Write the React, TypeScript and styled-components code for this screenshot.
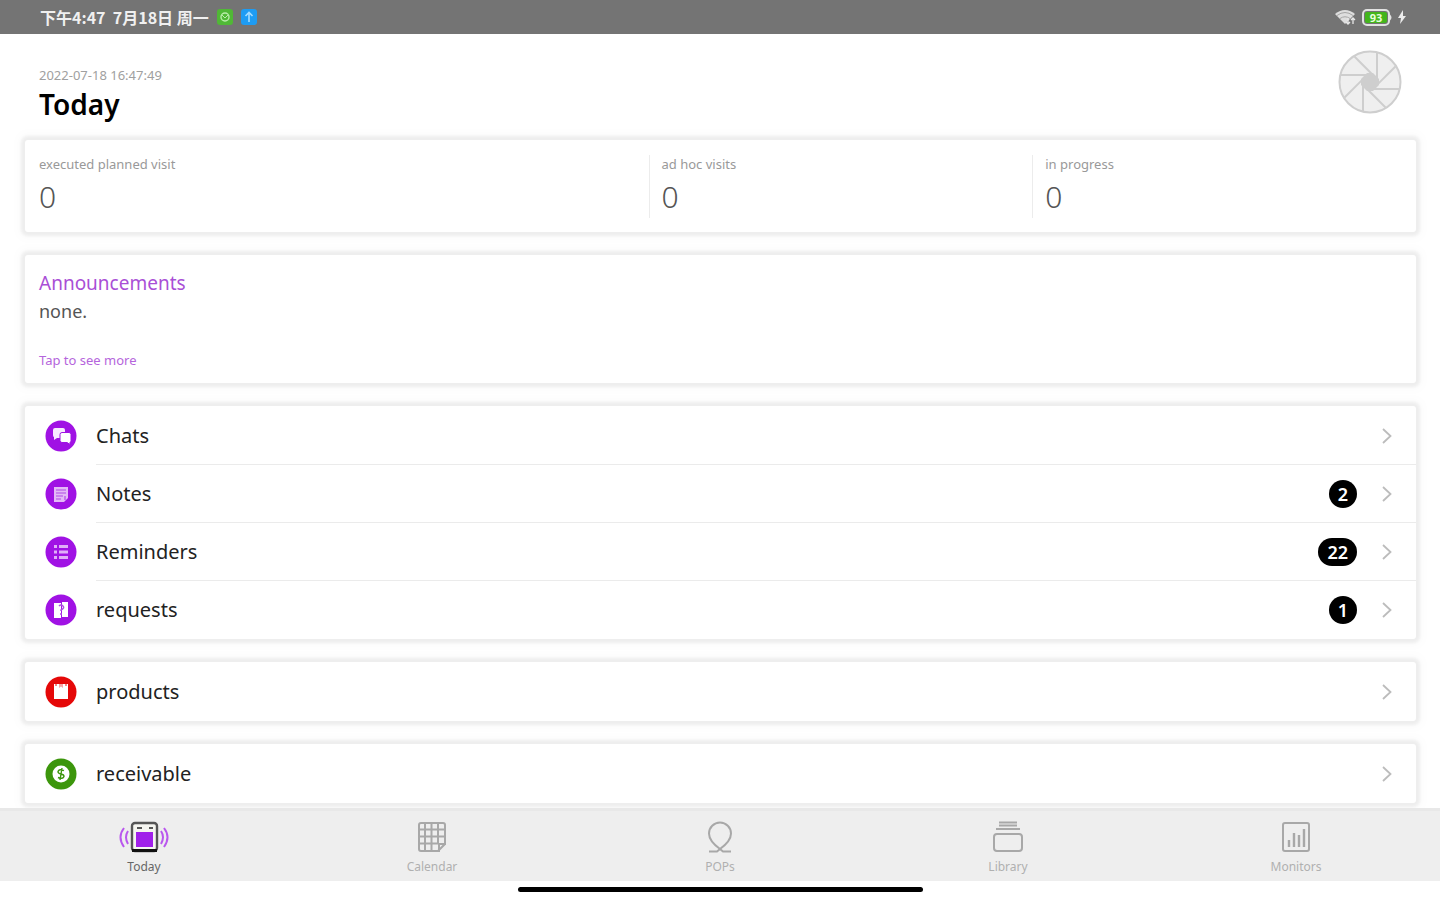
import React from "react";
import styled, { createGlobalStyle, css } from "styled-components";

const GlobalStyle = createGlobalStyle`
  * { box-sizing: border-box; }
  body {
    margin: 0;
    background: #fff;
    color: #222;
    font-family: "Noto Sans", "Noto Sans CJK SC", sans-serif;
  }
  h1, h2, p, ul, dl, dt, dd { margin: 0; padding: 0; }
  ul { list-style: none; }
`;

const Screen = styled.div`
  display: flex;
  flex-direction: column;
  height: 100vh;
  overflow: hidden;
`;

const StatusBar = styled.div`
  flex: none;
  display: flex;
  align-items: center;
  justify-content: space-between;
  height: 34px;
  padding: 0 34px 0 40px;
  background: #747474;
  color: #f0f0f0;
  font: 700 16px/24px "Noto Sans CJK SC", sans-serif;
`;

const StatusGroup = styled.div<{ $gap: number }>`
  display: flex;
  align-items: center;
  gap: ${(p) => p.$gap}px;
`;

const Content = styled.main`
  flex: 1;
  min-height: 0;
  overflow: hidden;
  display: flex;
  flex-direction: column;
  gap: 23px;
  padding: 0 24px 0 25px;
`;

const PageHeader = styled.header`
  flex: none;
  display: flex;
  justify-content: space-between;
  align-items: flex-start;
  height: 83px;
  padding: 16px 14px 0;
`;

const Heading = styled.div`
  padding-top: 16px;
`;

const Timestamp = styled.p`
  font-size: 13px;
  line-height: 18px;
  color: #a0a0a0;
`;

const Title = styled.h1`
  font-size: 28px;
  line-height: 40px;
  font-weight: 600;
  color: #000;
`;

const Card = styled.section`
  flex: none;
  background: #fff;
  border-radius: 3px;
  box-shadow: 0 0 3px 4px #eeeeee, 0 0 10px 8px rgba(0, 0, 0, 0.015);
`;

const Stats = styled.dl`
  display: grid;
  grid-template-columns: 13fr 8fr 8fr;
  height: 92px;
  padding: 15px 0 14px;
`;

const Stat = styled.div`
  padding: 0 12px;
  & + & { border-left: 1px solid #ececec; }
  &:first-child { padding-left: 14px; }
`;

const StatLabel = styled.dt`
  font-size: 13px;
  line-height: 18px;
  color: #999;
`;

const StatValue = styled.dd`
  padding-top: 6px;
  font-size: 30px;
  line-height: 36px;
  font-weight: 300;
  color: #555;
`;

const Announcement = styled.div`
  display: flex;
  flex-direction: column;
  align-items: flex-start;
  height: 128px;
  padding: 14px;
`;

const AnnouncementTitle = styled.h2`
  font-size: 19px;
  line-height: 28px;
  font-weight: 400;
  color: #a94fd6;
`;

const AnnouncementText = styled.p`
  font-size: 18px;
  line-height: 28px;
  color: #555;
`;

const MoreLink = styled.a`
  margin-top: 26px;
  font-size: 13px;
  line-height: 18px;
  color: #b565dc;
  text-decoration: none;
`;

const List = styled.ul`
  padding-top: 1px;
`;

const RowLink = styled.a`
  display: flex;
  align-items: center;
  gap: 19px;
  height: 58px;
  padding-left: 20px;
  color: #222;
  text-decoration: none;
`;

const RowBody = styled.span`
  flex: 1;
  align-self: stretch;
  display: flex;
  align-items: center;
  gap: 25px;
  padding-right: 24px;
`;

const Item = styled.li`
  &:not(:last-child) ${RowBody} { border-bottom: 1px solid #ebebeb; }
`;

const RowLabel = styled.span`
  flex: 1;
  font-size: 20px;
  line-height: 28px;
`;

const Badge = styled.span`
  min-width: 28px;
  height: 28px;
  padding: 0 9px;
  border-radius: 14px;
  background: #000;
  color: #fff;
  font-size: 18px;
  line-height: 28px;
  font-weight: 600;
  text-align: center;
`;

const TabBar = styled.nav`
  flex: none;
  display: grid;
  grid-template-columns: repeat(5, 1fr);
  height: 73px;
  background: #eee;
  border-top: 3px solid #e8e8e8;
`;

const Tab = styled.button<{ $active?: boolean }>`
  display: flex;
  flex-direction: column;
  align-items: center;
  gap: 5px;
  padding: 10px 0 0;
  border: 0;
  background: none;
  font: 12px/18px "Noto Sans", sans-serif;
  color: #b0b0b0;
  ${(p) => p.$active && css`color: #666;`}
`;

const HomeArea = styled.div`
  flex: none;
  display: flex;
  justify-content: center;
  height: 19px;
  padding-top: 6px;
`;

const HomeBar = styled.div`
  width: 405px;
  max-width: 60%;
  height: 5px;
  border-radius: 3px;
  background: #000;
`;

const Aperture = () => (
  <svg width="64" height="64" viewBox="0 0 64 64" fill="none" stroke="#cecece" strokeWidth="2">
    <circle cx="32" cy="32" r="30.5" fill="#efefef" />
    {[0, 45, 90, 135, 180, 225, 270, 315].map((a) => (
      <path key={a} d="M39 3V28" transform={`rotate(${a} 32 32)`} />
    ))}
    <path d="M29 23h6l6 6v6l-6 6h-6l-6-6v-6z" fill="#cecece" stroke="none" />
  </svg>
);

const MessageAppIcon = () => (
  <svg width="16" height="16" viewBox="0 0 16 16">
    <rect width="16" height="16" rx="3" fill="#50b836" />
    <circle cx="8" cy="8" r="4" fill="none" stroke="#b9ecaa" strokeWidth="1.4" />
    <path d="M5 6l3 3 3-3" fill="none" stroke="#b9ecaa" />
  </svg>
);

const UploadAppIcon = () => (
  <svg width="16" height="16" viewBox="0 0 16 16">
    <rect width="16" height="16" rx="3" fill="#1e9cf3" />
    <path d="M8 13V4M4.5 7L8 3.500l3.500 3.500" fill="none" stroke="#a4dcff" strokeWidth="1.600" />
  </svg>
);

const WifiIcon = () => (
  <svg width="22" height="18" viewBox="0 0 22 18">
    <path d="M0 6Q10 -2 20 6L10 16z" fill="#dedede" />
    <path d="M2 7.500Q10 1.500 18 7.500M5 10.500Q10 7 15 10.500" fill="none" stroke="#a5a5a5" />
    <path d="M13 10v6m-2-2l2 2 2-2M18 16v-6m-2 2l2-2 2 2" fill="none" stroke="#e8e8e8" strokeWidth="1.300" />
  </svg>
);

const BatteryIcon = () => (
  <svg width="31" height="17" viewBox="0 0 31 17">
    <rect x="1" y="1" width="26" height="15" rx="4" fill="#747474" stroke="#e2e2e2" strokeWidth="2" />
    <rect x="3" y="3" width="22" height="11" rx="2" fill="#43b51c" />
    <path d="M28 5.500q3 3 0 6z" fill="#e2e2e2" />
    <text x="14" y="12.500" textAnchor="middle" fontSize="11" fontWeight="700" fill="#e6ffdc" fontFamily="Noto Sans">93</text>
  </svg>
);

const BoltIcon = () => (
  <svg width="8" height="14" viewBox="0 0 8 14">
    <path d="M5 0L0 8h3l-1 6 6-8H5z" fill="#ececec" />
  </svg>
);

const Chevron = () => (
  <svg width="10" height="16" viewBox="0 0 10 16" fill="none" stroke="#bcbcbc" strokeWidth="1.800">
    <path d="M1 1l7.500 7L1 15" />
  </svg>
);

type Glyph = "chats" | "notes" | "reminders" | "requests" | "products" | "receivable";

const glyphs: Record<Glyph, { color: string; art: React.ReactNode }> = {
  chats: {
    color: "#a012e4",
    art: (
      <>
        <path d="M10 8h8q2 0 2 2v6q0 2-2 2h-6l-3 2v-3q-1 0-1-2v-5q0-2 2-2z" fill="#f8eaff" />
        <path d="M17 12.500h7q2 0 2 2v6q0 1-1 2v2l-3-2h-5q-2 0-2-2v-6q0-2 2-2z" fill="#fff" stroke="#a012e4" />
      </>
    ),
  },
  notes: {
    color: "#a012e4",
    art: (
      <>
        <path d="M9 9h14v11l-4 4H9z" fill="#e3b9f7" />
        <path d="M11 12h10M11 15h10M11 18h7M11 21h5M20 18v4" stroke="#b04be6" strokeWidth="1.200" />
      </>
    ),
  },
  reminders: {
    color: "#a012e4",
    art: <path d="M9 10.500h3M14 10.500h9M9 16h3M14 16h9M9 21.500h3M14 21.500h9" stroke="#e0aef8" strokeWidth="2.800" />,
  },
  requests: {
    color: "#a012e4",
    art: (
      <>
        <path d="M9 9h7v15H9zM17 8h6v15h-6z" fill="#fff" />
        <path d="M14 12q2-2 4 0t-2 4v1M16 19v2" fill="none" stroke="#b04be6" strokeWidth="1.500" />
      </>
    ),
  },
  products: {
    color: "#e50808",
    art: (
      <>
        <path d="M9 8h14v15H9z" fill="#fff" />
        <path d="M14 8v4l2-1.500 2 1.500V8" fill="#f7a3a3" />
        <path d="M11 8v2M21 8v2" stroke="#e50808" />
      </>
    ),
  },
  receivable: {
    color: "#3c960c",
    art: (
      <>
        <circle cx="16" cy="16" r="8.500" fill="#fff" />
        <path d="M19 12.500q-5-2-6 1 0 2 3 2.500t3 2.500q-1 3-6 1M17 10l-2 12" fill="none" stroke="#3c960c" strokeWidth="1.400" />
      </>
    ),
  },
};

const RowIcon = ({ name }: { name: Glyph }) => (
  <svg width="32" height="32" viewBox="0 0 32 32" aria-hidden="true">
    <circle cx="16" cy="16" r="15.500" fill={glyphs[name].color} />
    {glyphs[name].art}
  </svg>
);

const TodayIcon = () => (
  <svg width="50" height="32" viewBox="0 0 50 32" fill="none">
    <rect x="13" y="2" width="25" height="28" rx="3" fill="#f5f5f0" stroke="#555" strokeWidth="2.400" />
    <path d="M13 29.500h25" stroke="#111" strokeWidth="3" />
    <path d="M18 7h5M30 7h4" stroke="#555" strokeWidth="2" />
    <rect x="17" y="11" width="17" height="15" fill="#a020ea" />
    <path d="M5 7Q-2 16 5 26M9 10Q5 16 9 23M42 10q4 6 0 13M45 7q7 9 0 19" stroke="#b958ee" strokeWidth="2" />
  </svg>
);

const CalendarIcon = () => (
  <svg width="30" height="32" viewBox="0 0 30 32" fill="none" stroke="#a8a8a8" strokeWidth="2">
    <path d="M4 2h22q2 0 2 2v19h-6v7H4q-2 0-2-2V4q0-2 2-2z" />
    <path d="M8 2v28M14.500 2v28M21 2v21M2 8.500h26M2 15.500h26M2 22.500h20M28 23l-7 7" />
  </svg>
);

const PopsIcon = () => (
  <svg width="26" height="32" viewBox="0 0 26 32" fill="none" stroke="#a8a8a8" strokeWidth="2">
    <path d="M13 28Q2 20 2 12.500a11 11 0 0 1 22 0Q24 20 13 28z" />
    <path d="M2 30.500h8l3-2.500 3 2.500h8" />
  </svg>
);

const LibraryIcon = () => (
  <svg width="32" height="32" viewBox="0 0 32 32" fill="none" stroke="#a8a8a8" strokeWidth="2">
    <rect x="2" y="13" width="28" height="17" rx="3" />
    <path d="M4 8h24M7 4.500h18M7 1.500h18" strokeWidth="1.800" />
  </svg>
);

const MonitorsIcon = () => (
  <svg width="30" height="32" viewBox="0 0 30 32" fill="none" stroke="#a8a8a8" strokeWidth="2">
    <rect x="2" y="2" width="26" height="28" rx="2" />
    <path d="M8 19v7M13 12v14M18 14v12M23 8v18" strokeWidth="2.400" />
  </svg>
);

const stats = [
  { label: "executed planned visit", value: 0 },
  { label: "ad hoc visits", value: 0 },
  { label: "in progress", value: 0 },
];

type Entry = { icon: Glyph; label: string; count?: number };

const groups: Entry[][] = [
  [
    { icon: "chats", label: "Chats" },
    { icon: "notes", label: "Notes", count: 2 },
    { icon: "reminders", label: "Reminders", count: 22 },
    { icon: "requests", label: "requests", count: 1 },
  ],
  [{ icon: "products", label: "products" }],
  [{ icon: "receivable", label: "receivable" }],
];

const tabs = [
  { label: "Today", icon: <TodayIcon />, active: true },
  { label: "Calendar", icon: <CalendarIcon /> },
  { label: "POPs", icon: <PopsIcon /> },
  { label: "Library", icon: <LibraryIcon /> },
  { label: "Monitors", icon: <MonitorsIcon /> },
];

export default function App() {
  return (
    <Screen>
      <GlobalStyle />
      <StatusBar>
        <StatusGroup $gap={8}>
          <span>下午4:47&nbsp; 7月18日 周一</span>
          <MessageAppIcon />
          <UploadAppIcon />
        </StatusGroup>
        <StatusGroup $gap={5}>
          <WifiIcon />
          <BatteryIcon />
          <BoltIcon />
        </StatusGroup>
      </StatusBar>
      <Content>
        <PageHeader>
          <Heading>
            <Timestamp>2022-07-18 16:47:49</Timestamp>
            <Title>Today</Title>
          </Heading>
          <Aperture />
        </PageHeader>
        <Card>
          <Stats>
            {stats.map((s) => (
              <Stat key={s.label}>
                <StatLabel>{s.label}</StatLabel>
                <StatValue>{s.value}</StatValue>
              </Stat>
            ))}
          </Stats>
        </Card>
        <Card>
          <Announcement>
            <AnnouncementTitle>Announcements</AnnouncementTitle>
            <AnnouncementText>none.</AnnouncementText>
            <MoreLink href="#announcements">Tap to see more</MoreLink>
          </Announcement>
        </Card>
        {groups.map((group) => (
          <Card key={group[0].label}>
            <List>
              {group.map((e) => (
                <Item key={e.label}>
                  <RowLink href={`#${e.icon}`}>
                    <RowIcon name={e.icon} />
                    <RowBody>
                      <RowLabel>{e.label}</RowLabel>
                      {e.count !== undefined && <Badge>{e.count}</Badge>}
                      <Chevron />
                    </RowBody>
                  </RowLink>
                </Item>
              ))}
            </List>
          </Card>
        ))}
      </Content>
      <TabBar>
        {tabs.map((t) => (
          <Tab key={t.label} type="button" $active={t.active}>
            {t.icon}
            {t.label}
          </Tab>
        ))}
      </TabBar>
      <HomeArea>
        <HomeBar />
      </HomeArea>
    </Screen>
  );
}
